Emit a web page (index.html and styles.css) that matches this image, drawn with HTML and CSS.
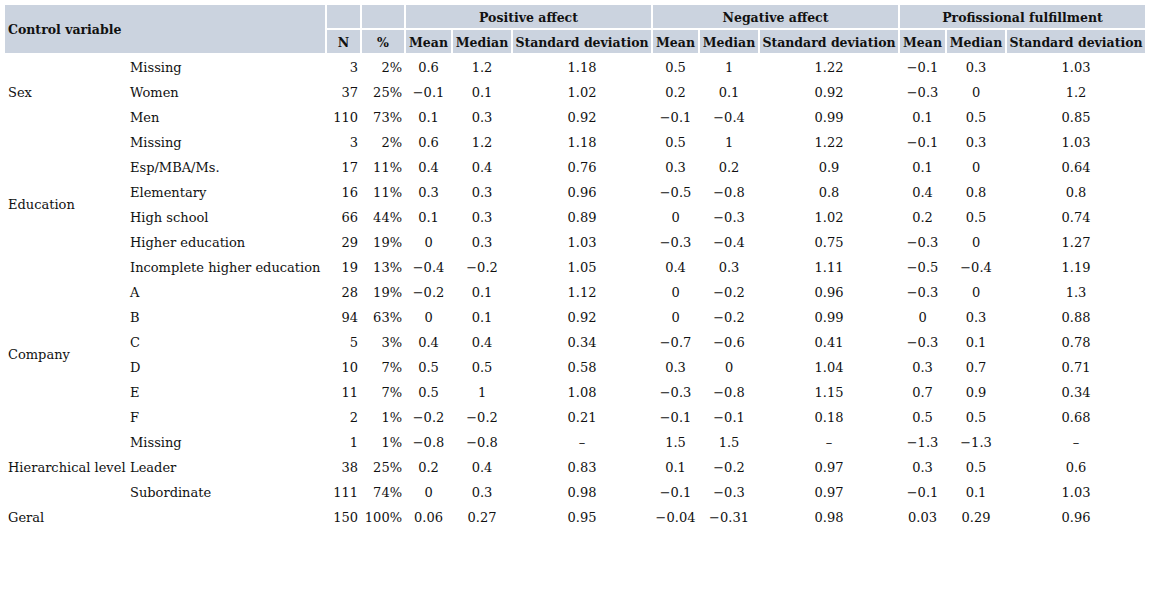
FILE: index.html
```html
<!DOCTYPE html>
<html>
<head>
<meta charset="utf-8">
<link rel="stylesheet" href="styles.css">
</head>
<body>
<table class="data">
  <colgroup>
    <col class="c-cat"><col class="c-sub"><col class="c-n"><col class="c-pct">
    <col class="c-mean"><col class="c-med"><col class="c-sd">
    <col class="c-mean"><col class="c-med"><col class="c-sd">
    <col class="c-mean"><col class="c-med"><col class="c-sd">
  </colgroup>
  <thead>
    <tr>
      <th class="left" colspan="2" rowspan="2">Control variable</th>
      <th></th><th></th>
      <th colspan="3">Positive affect</th>
      <th colspan="3">Negative affect</th>
      <th colspan="3">Profissional fulfillment</th>
    </tr>
    <tr>
      <th>N</th><th>%</th>
      <th>Mean</th><th>Median</th><th>Standard deviation</th>
      <th>Mean</th><th>Median</th><th>Standard deviation</th>
      <th>Mean</th><th>Median</th><th>Standard deviation</th>
    </tr>
  </thead>
  <tbody>
    <tr><td class="cat" rowspan="3">Sex</td><td class="sub">Missing</td><td class="r">3</td><td class="r">2%</td><td>0.6</td><td>1.2</td><td>1.18</td><td>0.5</td><td>1</td><td>1.22</td><td>−0.1</td><td>0.3</td><td>1.03</td></tr>
    <tr><td class="sub">Women</td><td class="r">37</td><td class="r">25%</td><td>−0.1</td><td>0.1</td><td>1.02</td><td>0.2</td><td>0.1</td><td>0.92</td><td>−0.3</td><td>0</td><td>1.2</td></tr>
    <tr><td class="sub">Men</td><td class="r">110</td><td class="r">73%</td><td>0.1</td><td>0.3</td><td>0.92</td><td>−0.1</td><td>−0.4</td><td>0.99</td><td>0.1</td><td>0.5</td><td>0.85</td></tr>
    <tr><td class="cat" rowspan="6">Education</td><td class="sub">Missing</td><td class="r">3</td><td class="r">2%</td><td>0.6</td><td>1.2</td><td>1.18</td><td>0.5</td><td>1</td><td>1.22</td><td>−0.1</td><td>0.3</td><td>1.03</td></tr>
    <tr><td class="sub">Esp/MBA/Ms.</td><td class="r">17</td><td class="r">11%</td><td>0.4</td><td>0.4</td><td>0.76</td><td>0.3</td><td>0.2</td><td>0.9</td><td>0.1</td><td>0</td><td>0.64</td></tr>
    <tr><td class="sub">Elementary</td><td class="r">16</td><td class="r">11%</td><td>0.3</td><td>0.3</td><td>0.96</td><td>−0.5</td><td>−0.8</td><td>0.8</td><td>0.4</td><td>0.8</td><td>0.8</td></tr>
    <tr><td class="sub">High school</td><td class="r">66</td><td class="r">44%</td><td>0.1</td><td>0.3</td><td>0.89</td><td>0</td><td>−0.3</td><td>1.02</td><td>0.2</td><td>0.5</td><td>0.74</td></tr>
    <tr><td class="sub">Higher education</td><td class="r">29</td><td class="r">19%</td><td>0</td><td>0.3</td><td>1.03</td><td>−0.3</td><td>−0.4</td><td>0.75</td><td>−0.3</td><td>0</td><td>1.27</td></tr>
    <tr><td class="sub">Incomplete higher education</td><td class="r">19</td><td class="r">13%</td><td>−0.4</td><td>−0.2</td><td>1.05</td><td>0.4</td><td>0.3</td><td>1.11</td><td>−0.5</td><td>−0.4</td><td>1.19</td></tr>
    <tr><td class="cat" rowspan="6">Company</td><td class="sub">A</td><td class="r">28</td><td class="r">19%</td><td>−0.2</td><td>0.1</td><td>1.12</td><td>0</td><td>−0.2</td><td>0.96</td><td>−0.3</td><td>0</td><td>1.3</td></tr>
    <tr><td class="sub">B</td><td class="r">94</td><td class="r">63%</td><td>0</td><td>0.1</td><td>0.92</td><td>0</td><td>−0.2</td><td>0.99</td><td>0</td><td>0.3</td><td>0.88</td></tr>
    <tr><td class="sub">C</td><td class="r">5</td><td class="r">3%</td><td>0.4</td><td>0.4</td><td>0.34</td><td>−0.7</td><td>−0.6</td><td>0.41</td><td>−0.3</td><td>0.1</td><td>0.78</td></tr>
    <tr><td class="sub">D</td><td class="r">10</td><td class="r">7%</td><td>0.5</td><td>0.5</td><td>0.58</td><td>0.3</td><td>0</td><td>1.04</td><td>0.3</td><td>0.7</td><td>0.71</td></tr>
    <tr><td class="sub">E</td><td class="r">11</td><td class="r">7%</td><td>0.5</td><td>1</td><td>1.08</td><td>−0.3</td><td>−0.8</td><td>1.15</td><td>0.7</td><td>0.9</td><td>0.34</td></tr>
    <tr><td class="sub">F</td><td class="r">2</td><td class="r">1%</td><td>−0.2</td><td>−0.2</td><td>0.21</td><td>−0.1</td><td>−0.1</td><td>0.18</td><td>0.5</td><td>0.5</td><td>0.68</td></tr>
    <tr><td class="cat" rowspan="3">Hierarchical level</td><td class="sub">Missing</td><td class="r">1</td><td class="r">1%</td><td>−0.8</td><td>−0.8</td><td>–</td><td>1.5</td><td>1.5</td><td>–</td><td>−1.3</td><td>−1.3</td><td>–</td></tr>
    <tr><td class="sub">Leader</td><td class="r">38</td><td class="r">25%</td><td>0.2</td><td>0.4</td><td>0.83</td><td>0.1</td><td>−0.2</td><td>0.97</td><td>0.3</td><td>0.5</td><td>0.6</td></tr>
    <tr><td class="sub">Subordinate</td><td class="r">111</td><td class="r">74%</td><td>0</td><td>0.3</td><td>0.98</td><td>−0.1</td><td>−0.3</td><td>0.97</td><td>−0.1</td><td>0.1</td><td>1.03</td></tr>
    <tr><td class="cat" colspan="2">Geral</td><td class="r">150</td><td class="r">100%</td><td>0.06</td><td>0.27</td><td>0.95</td><td>−0.04</td><td>−0.31</td><td>0.98</td><td>0.03</td><td>0.29</td><td>0.96</td></tr>
  </tbody>
</table>
</body>
</html>
```

FILE: styles.css
```css
body {
  margin: 3px;
  background: #ffffff;
  font-family: "DejaVu Serif", serif;
  font-size: 13px;
  color: #111111;
}

.data {
  border-collapse: separate;
  border-spacing: 2px;
  table-layout: fixed;
  width: 1144px;
}

.c-cat { width: 120px; }
.c-sub { width: 198px; }
.c-n { width: 33px; }
.c-pct { width: 42px; }
.c-mean { width: 45px; }
.c-med { width: 58px; }
.c-sd { width: 138px; }

.data th {
  background: #cbd3df;
  font-size: 12.5px;
  font-weight: bold;
  height: 23px;
  padding: 1px 1px 0;
  text-align: center;
  white-space: nowrap;
  box-sizing: border-box;
}

.data th.left {
  text-align: left;
  padding-left: 3px;
}

.data td {
  height: 23px;
  padding: 1px 2px 0;
  box-sizing: border-box;
  text-align: center;
  white-space: nowrap;
  vertical-align: middle;
}

.data td.cat,
.data td.sub {
  text-align: left;
  padding-left: 3px;
}

.data td.r {
  text-align: right;
}
```
